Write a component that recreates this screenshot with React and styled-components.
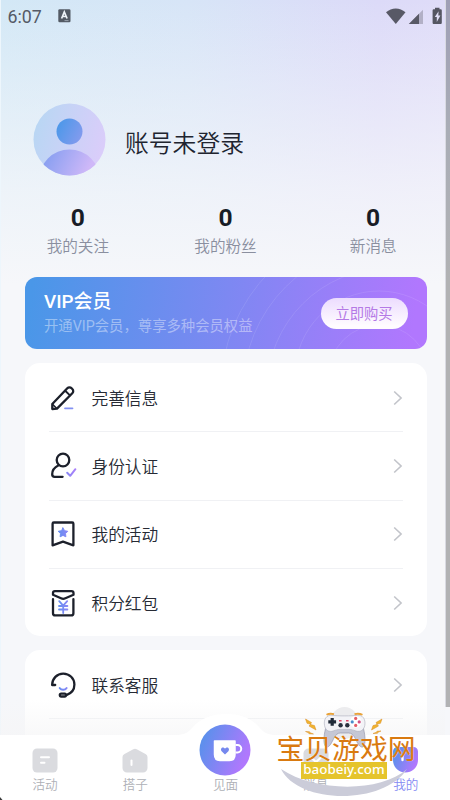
import styled, { createGlobalStyle } from "styled-components"

const GlobalStyle = createGlobalStyle`
  * {
    box-sizing: border-box;
  }
  body {
    margin: 0;
    overflow: hidden;
    background-color: #f5f7fa;
    font-family: "Noto Sans CJK SC", sans-serif;
  }
`
const Screen = styled.div`
  position: relative;
  width: 450px;
  height: 800px;
  display: flex;
  overflow: hidden;
  background-color: #f6f7fa;
`
const Page = styled.main`
  display: flex;
  flex-direction: column;
  flex: 1;
  min-width: 0;
  border-left: 1px solid #edf6fc;
  background:
    linear-gradient(180deg, rgba(246, 247, 250, 0) 0px, rgba(246, 247, 250, 0.36) 90px, rgba(246, 247, 250, 0.75) 190px, #f6f7fa 285px),
    linear-gradient(90deg, #d3e8f6 0%, #d7e5f7 42%, #dcdaf8 85%, #dfdcf8 100%);

  & > * {
    flex-shrink: 0;
  }
`
const Edge = styled.div`
  width: 5px;
  height: 707px;
  flex-shrink: 0;
  border-left: 1px solid #d9dae2;
  background: linear-gradient(180deg, #9f9fb6 0, #a9adb6 130px, #b1b2b4 280px);
`
const StatusBar = styled.header`
  display: flex;
  align-items: center;
  justify-content: space-between;
  height: 32px;
  padding: 0 3px 0 6.5px;
`
const StatusSide = styled.div`
  display: flex;
  align-items: center;
  gap: ${(props) => props.$gap}px;
`
const Clock = styled.span`
  font-family: Roboto, sans-serif;
  font-size: 17.8px;
  color: #555a66;
`
const Profile = styled.section`
  display: flex;
  align-items: center;
  gap: 19px;
  height: 73px;
  margin: 71px 0 0 32px;
`
const Name = styled.h1`
  margin: 5px 0 0;
  font-size: 23.8px;
  font-weight: 350;
  line-height: 34px;
  color: #20242f;
`
const Stats = styled.section`
  display: flex;
  justify-content: space-between;
  margin: 28px -2px 0 3px;
`
const Stat = styled.div`
  display: flex;
  flex-direction: column;
  align-items: center;
  flex: 1;
`
const StatValue = styled.span`
  font-family: Roboto, sans-serif;
  font-size: 24.6px;
  font-weight: 700;
  line-height: 28px;
  color: #181c26;
`
const StatLabel = styled.span`
  font-size: 15.6px;
  font-weight: 350;
  line-height: 27px;
  color: #8a8f9f;
`
const Vip = styled.section`
  position: relative;
  display: flex;
  align-items: center;
  justify-content: space-between;
  height: 72px;
  margin: 18px 18.5px 0 23.5px;
  padding: 0 19px 0 19.5px;
  border-radius: 12px;
  overflow: hidden;
  background: linear-gradient(98deg, #4a97e8 2%, #7d88f2 50%, #b177fe 96%);
`
const Rings = styled.svg`
  position: absolute;
  top: 0;
  right: 0;
`
const VipText = styled.div`
  display: flex;
  flex-direction: column;
`
const VipTitle = styled.h2`
  margin: 0;
  font-family: Roboto, "Noto Sans CJK SC", sans-serif;
  font-size: 18.9px;
  font-weight: 500;
  line-height: 27px;
  color: #fff;
`
const VipNote = styled.span`
  font-family: Roboto, "Noto Sans CJK SC", sans-serif;
  font-size: 14.35px;
  line-height: 24px;
  color: rgba(255, 255, 255, 0.42);
`
const BuyBtn = styled.button`
  position: relative;
  width: 87px;
  height: 31px;
  padding: 0 0 1px;
  border: none;
  border-radius: 16px;
  background: linear-gradient(180deg, #ecdcfe 0%, #fffcff 90%);
  font-family: inherit;
  font-size: 14.3px;
  color: #b479e6;
`
const Card = styled.section`
  display: flex;
  flex-direction: column;
  height: 273px;
  margin: 14px 18.5px 0 23.5px;
  padding: 1px 24px 0;
  border-radius: 15px;
  background-color: #fff;
`
const Row = styled.div`
  display: flex;
  align-items: center;
  flex-shrink: 0;
  height: 68.4px;
  border-bottom: ${(props) => (props.$line ? "1.5px solid #f0f1f4" : "none")};
`
const RowLabel = styled.span`
  flex: 1;
  margin-left: 15px;
  font-size: 16.7px;
  font-weight: 350;
  line-height: 26px;
  color: #262a34;
`
const RowIcon = styled.svg`
  width: 28px;
  height: 28px;
  fill: none;
  stroke: #1c202b;
  stroke-width: 2.3;
  stroke-linecap: round;
  stroke-linejoin: round;
`
const Arrow = styled.svg`
  width: 10px;
  height: 16px;
  fill: none;
  stroke: #c2c4ca;
  stroke-width: 1.6;
`
const TabBar = styled.nav`
  position: absolute;
  left: 0;
  bottom: 0;
  width: 450px;
  height: 65px;
  display: flex;
  background-color: #fff;
`
const Fade = styled.div`
  position: absolute;
  left: 0;
  bottom: 65px;
  width: 445px;
  height: 35px;
  background: linear-gradient(180deg, rgba(245, 245, 246, 0), rgba(245, 245, 246, 0.65));
`
const Hump = styled.svg`
  position: absolute;
  left: 175px;
  top: -22px;
`
const Tab = styled.div`
  position: relative;
  display: flex;
  flex-direction: column;
  align-items: center;
  justify-content: flex-end;
  width: 90.2px;
  flex-shrink: 0;
  padding-bottom: 5px;
`
const CupButton = styled.svg`
  flex-shrink: 0;
  margin-bottom: -3px;
`
const TabLabel = styled.span`
  font-size: 12.6px;
  font-weight: 350;
  line-height: 22px;
  color: ${(props) => (props.$active ? "#858af3" : "#aeb0b6")};
`
const Watermark = styled.div`
  position: absolute;
  left: 270px;
  top: 700px;
  width: 152px;
  height: 100px;
  display: flex;
  flex-direction: column;
  align-items: center;
  padding-top: 33px;
`
const Art = styled.svg`
  position: absolute;
  left: 0;
  top: 0;
`
const SiteName = styled.span`
  position: relative;
  height: 29px;
  font-size: 27.8px;
  font-weight: 400;
  line-height: 29px;
  white-space: nowrap;
  color: #d97a10;
  text-shadow: 0 0 1px rgba(255, 255, 255, 0.9);
`
const SiteUrl = styled.span`
  position: relative;
  width: 86px;
  height: 16.5px;
  margin-right: 4px;
  background-color: #e5c42c;
  font-family: "Noto Sans", sans-serif;
  font-size: 13.4px;
  font-weight: 500;
  line-height: 15px;
  text-align: center;
  color: #fff;
`
const Speck = styled.svg`
  position: absolute;
  left: 0;
  bottom: 0;
`

const Defs = () => (
  <svg width="0" height="0" style={{ position: "absolute" }}>
    <defs>
      <linearGradient id="accent" x1="0" y1="0" x2="1" y2="0.4">
        <stop offset="0" stopColor="#4d94e9" />
        <stop offset="1" stopColor="#b078fd" />
      </linearGradient>
      <linearGradient id="small" gradientUnits="userSpaceOnUse" x1="9" y1="0" x2="26" y2="0">
        <stop offset="0" stopColor="#638ff0" />
        <stop offset="1" stopColor="#a980fa" />
      </linearGradient>
      <linearGradient id="avatarBg" x1="0" y1="0.2" x2="1" y2="0.5">
        <stop offset="0" stopColor="#b7d7f3" />
        <stop offset="1" stopColor="#dacdfa" />
      </linearGradient>
      <linearGradient id="head" x1="0" y1="0.3" x2="1" y2="0.8">
        <stop offset="0" stopColor="#4c98e9" />
        <stop offset="1" stopColor="#869bee" />
      </linearGradient>
      <linearGradient id="torso" x1="0.1" y1="0" x2="0.8" y2="0.35">
        <stop offset="0" stopColor="#829df0" />
        <stop offset="1" stopColor="#cfb8f8" />
      </linearGradient>
    </defs>
  </svg>
)

const icons = {
  edit: (
    <>
      <path d="M3.3 25v-5L18.3 4.3a3 3 0 0 1 4.3 0l.7.7a3 3 0 0 1 0 4.3L8 24.6 3.3 25z" />
      <path d="M16.2 6.8l4.8 4.6" strokeWidth="2" />
      <path d="M3.8 20.6l3.8 3.6" strokeWidth="1.5" />
      <path d="M16 24.3h7.5" stroke="#8391f2" strokeWidth="1.8" />
    </>
  ),
  verify: (
    <>
      <circle cx="14" cy="8" r="6.3" />
      <path d="M9.2 13.6C5.3 15.6 3.2 18.7 3.2 22.2c0 1.8.8 2.6 2.4 2.6h8" />
      <path d="M18.2 20.8l3 3 5.2-6.6" stroke="url(#small)" strokeWidth="2" />
    </>
  ),
  event: (
    <>
      <path d="M4.8 2.5h18.4c.8 0 1.2.4 1.2 1.2v21.6L14 21.7 3.6 25.3V3.7c0-.8.4-1.2 1.2-1.2z" />
      <path d="M14 7.9l1.6 2.8 3.2.6-2.3 2.3.4 3.2-2.9-1.4-2.9 1.4.4-3.2-2.3-2.3 3.2-.6z" fill="url(#small)" stroke="url(#small)" strokeWidth="1" />
    </>
  ),
  packet: (
    <>
      <path d="M5.9 2.1h16.6c1.3 0 2 .8 2 1.9v1.8L16.4 9.3a5 5 0 0 1-4.4 0L4 5.8V4c0-1.1.7-1.9 1.9-1.9z" />
      <path d="M4 10.2v14c0 1.4.8 2.2 2.2 2.2h16c1.4 0 2.2-.8 2.2-2.2v-14" />
      <path d="M10.2 12.2l4 4.4 4-4.4M10 17h8.4M10 20.5h8.4M14.2 16.8v7.3" stroke="url(#small)" strokeWidth="1.8" />
    </>
  ),
  service: (
    <>
      <path d="M6.2 14H3.1C3.2 7.6 8 2.6 14.2 2.6c6.3 0 11.2 4.8 11.2 11 0 5-3.3 9-8 10.5" />
      <rect x="10.8" y="22.6" width="6.2" height="2.9" rx="1.4" />
      <path d="M10.7 17.1c1.6 2.1 5.3 2.1 6.9 0" stroke="url(#small)" strokeWidth="1.9" />
    </>
  ),
}

const mainRows = [
  { icon: "edit", label: "完善信息" },
  { icon: "verify", label: "身份认证" },
  { icon: "event", label: "我的活动" },
  { icon: "packet", label: "积分红包" },
]

const stats = [
  { label: "我的关注", value: 0 },
  { label: "我的粉丝", value: 0 },
  { label: "新消息", value: 0 },
]

const MenuRow = ({ icon, label, line }) => (
  <Row $line={line}>
    <RowIcon viewBox="0 0 28 28">{icons[icon]}</RowIcon>
    <RowLabel>{label}</RowLabel>
    <Arrow viewBox="0 0 10 16">
      <path d="M1.2 1.5L8.1 8l-6.9 6.5" />
    </Arrow>
  </Row>
)

const Avatar = () => (
  <svg width="73" height="73" viewBox="0 0 73 73">
    <clipPath id="round">
      <circle cx="36.5" cy="36.5" r="36" />
    </clipPath>
    <circle cx="36.5" cy="36.5" r="36" fill="url(#avatarBg)" />
    <circle cx="36.5" cy="28.5" r="13" fill="url(#head)" />
    <circle cx="36.5" cy="77" r="30.5" fill="url(#torso)" clipPath="url(#round)" />
  </svg>
)

const Status = () => (
  <StatusBar>
    <StatusSide $gap={16.5}>
      <Clock>6:07</Clock>
      <svg width="13" height="14" viewBox="0 0 13 14">
        <rect x="0.3" y="0.3" width="12.2" height="13" rx="1.3" fill="#535a64" />
        <path d="M3.6 9.5L6.3 3l2.8 6.5M4.5 7.5h3.7" fill="none" stroke="#eef3f8" strokeWidth="1.7" />
        <path d="M6.5 11.6h4" stroke="#aab4bf" strokeWidth="0.8" />
      </svg>
    </StatusSide>
    <StatusSide $gap={0}>
      <svg width="56" height="18" viewBox="0 0 56 18">
        <path d="M0 5.2C5.6.1 13.9.1 19.5 5.2L9.8 17z" fill="#585966" />
        <path d="M22.8 17L37 2.8V17z" fill="#b2b0c6" />
        <path d="M22.8 17L33 6.8V17z" fill="#585966" />
        <path d="M49 .8h4.5v1.5h1c.8 0 1.3.5 1.3 1.2v12.3c0 .8-.5 1.3-1.3 1.3h-6.6c-.8 0-1.3-.5-1.3-1.3V3.5c0-.7.5-1.2 1.3-1.2H49z" fill="#555662" />
        <path d="M52.6 4.3L48.8 10h2v5l3.6-6.4h-2.1z" fill="#e0def5" />
      </svg>
    </StatusSide>
  </StatusBar>
)

const Site = () => (
  <Watermark>
    <Art width="152" height="100" viewBox="0 0 152 100">
      <ellipse cx="74.5" cy="23" rx="14.5" ry="16" fill="#ececee" />
      <path d="M11 69C28 104 113 106 137 69 110 93 45 92 11 69z" fill="#cbccd9" />
      {/* grips */}
      <path d="M56.5 25C54 33 52.500 44 56 47c3.500 1 6-5 8-9 2-3.500 3.500-5 6.500-5h8c3 0 4.500 1.500 6.500 5 2 4 4.500 10 8 9 3.500-3 2-14-.5-22z" fill="#c5c7d5" stroke="#8b8da2" strokeWidth=".6" />
      {/* face plate */}
      <path d="M62 15.3c-5.500-.6-8.500 4-7.500 10 .8 5 4.500 7 8.500 5.700 3-1 4.500-1.600 7-1.600h9c2.500 0 4 .6 7 1.600 4.500 1.300 8-1 8.800-5.700 1-6-2-10.600-7.500-10-5 .8-20 .8-25.300 0z" fill="#f3f3f7" stroke="#a9abbb" strokeWidth=".6" />
      <path d="M56.5 14.8c2-1.2 5-1.2 7.5-.7M84.500 14.100c2.500-.5 5.500-.5 8 .7" fill="none" stroke="#e9a33a" strokeWidth="1.8" />
      <path d="M62.2 18v7.8M58.3 21.9h7.8" stroke="#202a38" strokeWidth="3.2" />
      <circle cx="70.6" cy="25.2" r="2.2" fill="#28303d" />
      <circle cx="77.3" cy="25.2" r="2.2" fill="#28303d" />
      <path d="M69 20.7h2.6M76 20.7h2.6" stroke="#df4868" strokeWidth="1.5" />
      <circle cx="85.7" cy="21.9" r="5.8" fill="#fff" />
      <circle cx="85.7" cy="18.4" r="1.6" fill="#e45c67" />
      <circle cx="85.7" cy="25.4" r="1.6" fill="#e45c67" />
      <circle cx="82.2" cy="21.9" r="1.6" fill="#4b8ecb" />
      <circle cx="89.2" cy="21.9" r="1.6" fill="#d14f85" />
      {/* sparks */}
      <g fill="#f0b42e" stroke="#d98b24" strokeWidth=".5">
        <path d="M35.5 19l6 3.5-1 1.9 4 1.2L46 30l-7-4 1.500-1.700-3.500-1z" />
        <path d="M112 19l-6 3.5 1 1.9-4 1.2L101.500 30l7-4-1.500-1.700 3.500-1z" />
        <path d="M35.5 31.5l4 .2.5 1 3.5 1.3-4.5-.2-.5-1z" />
        <path d="M111 31l-4 .2-.5 1-3.500 1.300 4.500-.2.500-1z" />
      </g>
    </Art>
    <SiteName>宝贝游戏网</SiteName>
    <SiteUrl>baobeiy.com</SiteUrl>
  </Watermark>
)

const Tabs = () => (
  <TabBar>
    <Hump width="102" height="60" viewBox="0 0 102 60">
      <path d="M0 22c9 0 13-2 18-8C26 5 37 1 51 1s25 4 33 13c5 6 9 8 18 8v38H0z" fill="#fff" />
    </Hump>
    <Tab>
      <svg width="26" height="25" viewBox="0 0 26 25">
        <rect x="0.5" y="0.5" width="25" height="24" rx="4.5" fill="#dadbdf" />
        <path d="M9 9.3h8M9 14.8h3.5" stroke="#fff" strokeWidth="2" strokeLinecap="round" />
      </svg>
      <TabLabel>活动</TabLabel>
    </Tab>
    <Tab>
      <svg width="26" height="25" viewBox="0 0 26 25">
        <path d="M11.3 1.2a3.5 3.5 0 0 1 3.4 0l8.8 4.7a3.5 3.5 0 0 1 2 3.2V20a4.5 4.5 0 0 1-4.5 4.5H5A4.5 4.5 0 0 1 .5 20V9.1a3.5 3.5 0 0 1 2-3.2z" fill="#dadbdf" />
        <path d="M9.5 12.5v4.5" stroke="#fff" strokeWidth="2" strokeLinecap="round" />
      </svg>
      <TabLabel>搭子</TabLabel>
    </Tab>
    <Tab>
      <CupButton width="52" height="52" viewBox="0 0 52 52">
        <circle cx="26" cy="26" r="25.5" fill="url(#accent)" />
        <path d="M15.5 17H36v13.5c0 4-2 6-5.5 6H21c-3.5 0-5.5-2-5.5-6z" fill="#fff" stroke="#fff" strokeWidth="1.5" strokeLinejoin="round" />
        <path d="M36.5 21h2a3.7 3.7 0 0 1 0 7.5h-2" fill="none" stroke="#fff" strokeWidth="2" />
        <path d="M26 30.5l-3.4-3.3c-1.6-1.7.2-4.5 2.5-3.3l.9.7.9-.7c2.3-1.2 4.1 1.6 2.5 3.3z" fill="#7588ee" />
      </CupButton>
      <TabLabel>见面</TabLabel>
    </Tab>
    <Tab>
      <svg width="26" height="25" viewBox="0 0 26 25">
        <rect x="0.5" y="0.5" width="25" height="24" rx="5" fill="#dadbdf" />
        <path d="M8 9.5l5 4.5 5-4.5" fill="none" stroke="#fff" strokeWidth="2.2" strokeLinecap="round" />
      </svg>
      <TabLabel>消息</TabLabel>
    </Tab>
    <Tab>
      <svg width="27" height="26" viewBox="0 0 27 26">
        <path d="M1 4.5A4.5 4.5 0 0 1 5.5 0h16A4.5 4.5 0 0 1 26 4.5V13c0 7-5.5 12.5-12.5 12.5S1 20 1 13z" fill="url(#accent)" />
        <path d="M10.5 8.5V13" stroke="#fff" strokeWidth="2.4" strokeLinecap="round" />
      </svg>
      <TabLabel $active>我的</TabLabel>
    </Tab>
  </TabBar>
)

const App = () => {
  return (
    <Screen>
      <GlobalStyle />
      <Defs />
      <Page>
        <Status />
        <Profile>
          <Avatar />
          <Name>账号未登录</Name>
        </Profile>
        <Stats>
          {stats.map((stat) => (
            <Stat key={stat.label}>
              <StatValue>{stat.value}</StatValue>
              <StatLabel>{stat.label}</StatLabel>
            </Stat>
          ))}
        </Stats>
        <Vip>
          <Rings width="230" height="72" viewBox="0 0 230 72" fill="none" stroke="#fff" strokeOpacity="0.1">
            <circle cx="182" cy="98" r="50" />
            <circle cx="182" cy="98" r="84" />
            <circle cx="192" cy="113" r="122" />
            <circle cx="192" cy="113" r="146" />
            <circle cx="192" cy="113" r="168" />
          </Rings>
          <VipText>
            <VipTitle>VIP会员</VipTitle>
            <VipNote>开通VIP会员，尊享多种会员权益</VipNote>
          </VipText>
          <BuyBtn>立即购买</BuyBtn>
        </Vip>
        <Card>
          {mainRows.map((row, i) => (
            <MenuRow key={row.label} icon={row.icon} label={row.label} line={i < mainRows.length - 1} />
          ))}
        </Card>
        <Card>
          <MenuRow icon="service" label="联系客服" line />
        </Card>
      </Page>
      <Edge />
      <Fade />
      <Tabs />
      <Site />
      <Speck width="3" height="3" viewBox="0 0 3 3">
        <path d="M0 0l2.5 3H0z" fill="#3a3a3a" />
      </Speck>
    </Screen>
  )
}

export default App
